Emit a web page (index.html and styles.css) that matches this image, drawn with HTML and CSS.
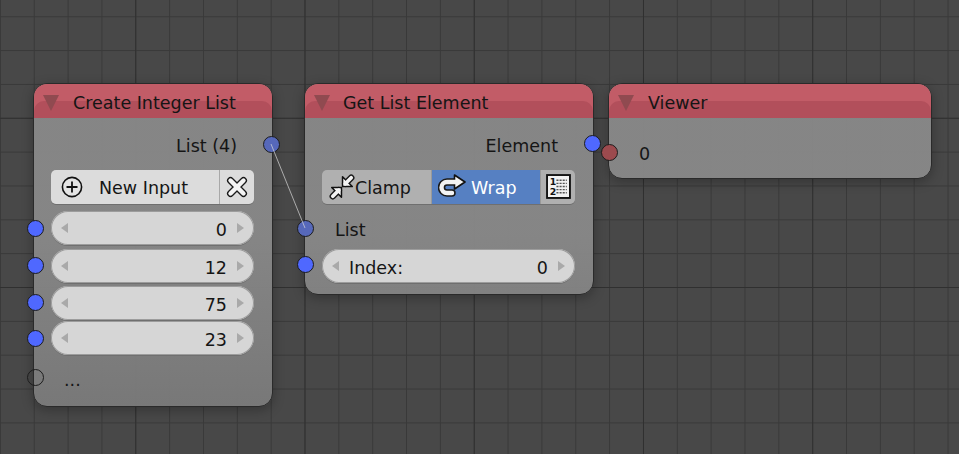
FILE: index.html
```html
<!DOCTYPE html>
<html lang="en">
<head>
<meta charset="UTF-8">
<title>Node Editor</title>
<link rel="stylesheet" href="styles.css">
</head>
<body>

<div class="canvas">

    <!-- Create Integer List -->
    <div class="node node-list">
        <div class="node-header"><span class="collapse"></span><span class="node-title">Create Integer List</span></div>
        <div class="node-body">
            <div class="row row-right output-row">List (4)</div>
            <div class="btn-row">
                <div class="btn btn-new">
                    <svg class="icon" viewBox="0 0 22 22"><circle cx="11" cy="11" r="9.6" fill="#e4e4e4" stroke="#111" stroke-width="1.6"/><path d="M11 5.5v11M5.5 11h11" stroke="#111" stroke-width="1.8" fill="none"/></svg>
                    <span class="btn-label">New Input</span>
                </div>
                <div class="btn btn-x">
                    <svg class="icon" viewBox="0 0 22 22"><path class="icon-edge" d="M4.500 4.500l13 13M17.500 4.500l-13 13" stroke-width="7"/><path class="icon-fill" d="M4.500 4.500l13 13M17.500 4.500l-13 13" stroke-width="4.400"/></svg>
                </div>
            </div>
            <div class="field-stack">
                <div class="field"><span class="arrow-l"></span><span class="field-value">0</span><span class="arrow-r"></span></div>
                <div class="field"><span class="arrow-l"></span><span class="field-value">12</span><span class="arrow-r"></span></div>
                <div class="field"><span class="arrow-l"></span><span class="field-value">75</span><span class="arrow-r"></span></div>
                <div class="field"><span class="arrow-l"></span><span class="field-value">23</span><span class="arrow-r"></span></div>
            </div>
            <div class="row dots-row">...</div>
        </div>
    </div>

    <!-- Get List Element -->
    <div class="node node-get">
        <div class="node-header"><span class="collapse"></span><span class="node-title">Get List Element</span></div>
        <div class="node-body">
            <div class="row row-right output-row">Element</div>
            <div class="btn-row">
                <div class="btn btn-clamp">
                    <svg class="icon" viewBox="0 0 24 24"><path class="icon-edge" d="M15 9l5.500-5.500M9 15l-5.500 5.500" stroke-width="6"/><path d="M12.500 11.500V2.500L21.500 11.500zM11.500 12.500v9L2.500 12.500z" fill="#f6f6f6" stroke="#111" stroke-width="1.400" stroke-linejoin="round"/><path class="icon-fill" d="M15 9l5.500-5.500M9 15l-5.500 5.500" stroke-width="3.400"/></svg>
                    <span>Clamp</span>
                </div>
                <div class="btn btn-wrap">
                    <svg class="icon icon-hook" viewBox="0 0 28 24"><path class="icon-edge" d="M17 8H9a5.500 5.500 0 0 0 0 11h5" stroke-width="7.500"/><path d="M16.500 1L27 8 16.500 15z" fill="#f4f4f4" stroke="#111" stroke-width="1.600" stroke-linejoin="round"/><path class="icon-fill" d="M18 8H9a5.500 5.500 0 0 0 0 11h5" stroke-width="4.400"/></svg>
                    <span class="wrap-label">Wrap</span>
                </div>
                <div class="btn btn-table">
                    <svg class="icon" viewBox="0 0 24 24"><rect x="1" y="1" width="22" height="22" fill="#f2f2f2" stroke="#111" stroke-width="1.800"/><text class="table-num" x="3.500" y="11">1</text><text class="table-num" x="3.500" y="20">2</text><path d="M10 6h10M10 9h10M10 12h10M10 15h10M10 18h10" stroke="#555" stroke-width="1.300" stroke-dasharray="2 1" fill="none"/></svg>
                </div>
            </div>
            <div class="row list-row">List</div>
            <div class="field field-index"><span class="arrow-l"></span><span class="field-name">Index:</span><span class="field-value">0</span><span class="arrow-r"></span></div>
        </div>
    </div>

    <!-- Viewer -->
    <div class="node node-viewer">
        <div class="node-header"><span class="collapse"></span><span class="node-title">Viewer</span></div>
        <div class="node-body">
            <div class="row viewer-value">0</div>
        </div>
    </div>

    <svg class="wire" width="959" height="454"><line x1="271" y1="144" x2="305" y2="228"/></svg>

    <span class="socket linked" style="left:271.500px;top:144px"></span>
    <span class="socket" style="left:35px;top:228px"></span>
    <span class="socket" style="left:35px;top:265px"></span>
    <span class="socket" style="left:35px;top:302px"></span>
    <span class="socket" style="left:35px;top:338px"></span>
    <span class="socket empty" style="left:35px;top:377px"></span>
    <span class="socket" style="left:592.500px;top:143px"></span>
    <span class="socket linked" style="left:305px;top:228px"></span>
    <span class="socket" style="left:305px;top:264px"></span>
    <span class="socket red" style="left:609.500px;top:152px"></span>
</div>

</body>
</html>
```

FILE: styles.css
```css
/* node editor */
html, body {
    margin: 0;
    padding: 0;
    overflow: hidden;
}
.canvas {
    position: relative;
    width: 959px;
    height: 454px;
    overflow: hidden;
    font-family: "DejaVu Sans", sans-serif;
    font-size: 17.500px;
    color: #151515;
    background-color: #484848;
    background-image:
        linear-gradient(to bottom, #303030 1px, transparent 1px),
        linear-gradient(to right, #303030 1px, transparent 1px),
        linear-gradient(to bottom, #393939 1px, transparent 1px),
        linear-gradient(to right, #393939 1px, transparent 1px);
    background-size: 169.250px 169.250px, 169.250px 169.250px, 33.850px 33.850px, 33.850px 33.850px;
    background-position: 0 117.750px, 135.250px 0, 0 16.250px, 33.750px 0;
}

/* nodes */
.node {
    position: absolute;
    box-sizing: border-box;
    border-radius: 14px;
    border: 1px solid #2a2a2a;
    box-shadow: 0 3px 12px rgba(0, 0, 0, 0.28);
    overflow: hidden;
    background: linear-gradient(rgba(136, 136, 136, 0.96) 150px, rgba(122, 122, 122, 0.96) 322px);
}
.node-list { left: 33px; top: 83px; width: 240px; height: 324px; }
.node-get { left: 304px; top: 83px; width: 290px; height: 212px; }
.node-viewer { left: 608px; top: 83px; width: 324px; height: 96px; }

.node-header {
    position: relative;
    display: flex;
    align-items: center;
    box-sizing: border-box;
    height: 34px;
    padding: 4px 0 0 9px;
    background: #c25c67;
}
.node-header::before {
    content: "";
    position: absolute;
    left: 0;
    right: 0;
    top: 17px;
    bottom: 0;
    background: #b24f5b;
    border-radius: 10px 10px 0 0;
}
.collapse {
    position: relative;
    width: 0;
    height: 0;
    border-left: 8.500px solid transparent;
    border-right: 8.500px solid transparent;
    border-top: 16px solid #904a50;
}
.node-title {
    position: relative;
    margin-left: 14px;
}
.node-get .node-title { margin-left: 13px; }

.node-body {
    display: flex;
    flex-direction: column;
    padding: 0 18px 0 17px;
}
.row {
    display: flex;
    align-items: center;
    box-sizing: border-box;
    height: 34px;
    padding-top: 2px;
}
.row-right { justify-content: flex-end; }
.output-row { margin-top: 10px; padding-right: 17px; }

/* buttons */
.btn-row {
    display: flex;
    height: 34px;
    margin-top: 8px;
    border-radius: 5px;
    overflow: hidden;
    box-shadow: 0 1px 0 #6f6f6f;
}
.btn {
    display: flex;
    align-items: center;
    box-sizing: border-box;
    padding-top: 2px;
}
.icon { width: 22px; height: 22px; flex: none; margin-top: -3px; }
.icon-edge { fill: none; stroke: #1a1a1a; stroke-linecap: round; }
.icon-fill { fill: none; stroke: #f4f4f4; stroke-linecap: round; }
.table-num { font-size: 9px; font-weight: bold; fill: #111; }
.btn-new {
    flex: 1;
    padding-left: 10px;
    background: #dcdcdc;
    border-right: 1px solid #a8a8a8;
}
.btn-label { margin-left: 16px; }
.btn-x {
    width: 34px;
    justify-content: center;
    background: #dcdcdc;
}
.btn-clamp {
    width: 110px;
    padding-left: 7px;
    background: #b0b0b0;
    border-right: 1px solid #999;
}
.btn-clamp .icon { width: 26px; height: 26px; }
.btn-wrap {
    width: 109px;
    padding-left: 6px;
    background: #5680c2;
    color: #fff;
    border-right: 1px solid #999;
}
.btn-wrap .icon { width: 28px; height: 24px; margin-top: -5px; }
.wrap-label { margin-left: 5px; }
.btn-table {
    flex: 1;
    justify-content: center;
    background: #b0b0b0;
}
.btn-table .icon { width: 25px; height: 25px; }

/* number fields */
.field-stack {
    display: flex;
    flex-direction: column;
    margin-top: 7px;
}
.field {
    display: flex;
    align-items: center;
    box-sizing: border-box;
    height: 34px;
    padding: 0 10px;
    border-radius: 17px;
    background: #d6d6d6;
    box-shadow: 0 1px 0 #6f6f6f, 0 0 0 1px #9c9c9c inset;
}
.field-stack .field:nth-child(2) { margin-top: 4px; }
.field-stack .field:nth-child(3) { margin-top: 3px; }
.field-stack .field:nth-child(4) { margin-top: 1px; }
.field-value { margin-left: auto; margin-right: 10px; padding-top: 3px; }
.field-name { margin-left: 10px; padding-top: 3px; }
.field-index { margin-top: 3px; }
.arrow-l, .arrow-r {
    width: 0;
    height: 0;
    border-top: 5px solid transparent;
    border-bottom: 5px solid transparent;
}
.arrow-l { border-right: 7px solid #a9a9a9; }
.arrow-r { border-left: 7px solid #a9a9a9; }

.dots-row { margin-top: 7px; padding-left: 13px; }
.list-row { margin-top: 8px; padding-left: 13px; }
.viewer-value { margin-top: 18px; padding-left: 13px; }

/* links and sockets */
.wire {
    position: absolute;
    left: 0;
    top: 0;
    z-index: 2;
}
.wire line {
    stroke: rgba(215, 215, 215, 0.7);
    stroke-width: 1;
}
.socket {
    position: absolute;
    box-sizing: border-box;
    width: 17px;
    height: 17px;
    margin: -8.500px 0 0 -8.500px;
    border-radius: 50%;
    border: 1px solid #1c1c1c;
    background: #4f68ff;
    z-index: 1;
}
.socket.linked { background: #5668ba; }
.socket.empty { background: transparent; }
.socket.red { background: #9c4a4e; }
```
